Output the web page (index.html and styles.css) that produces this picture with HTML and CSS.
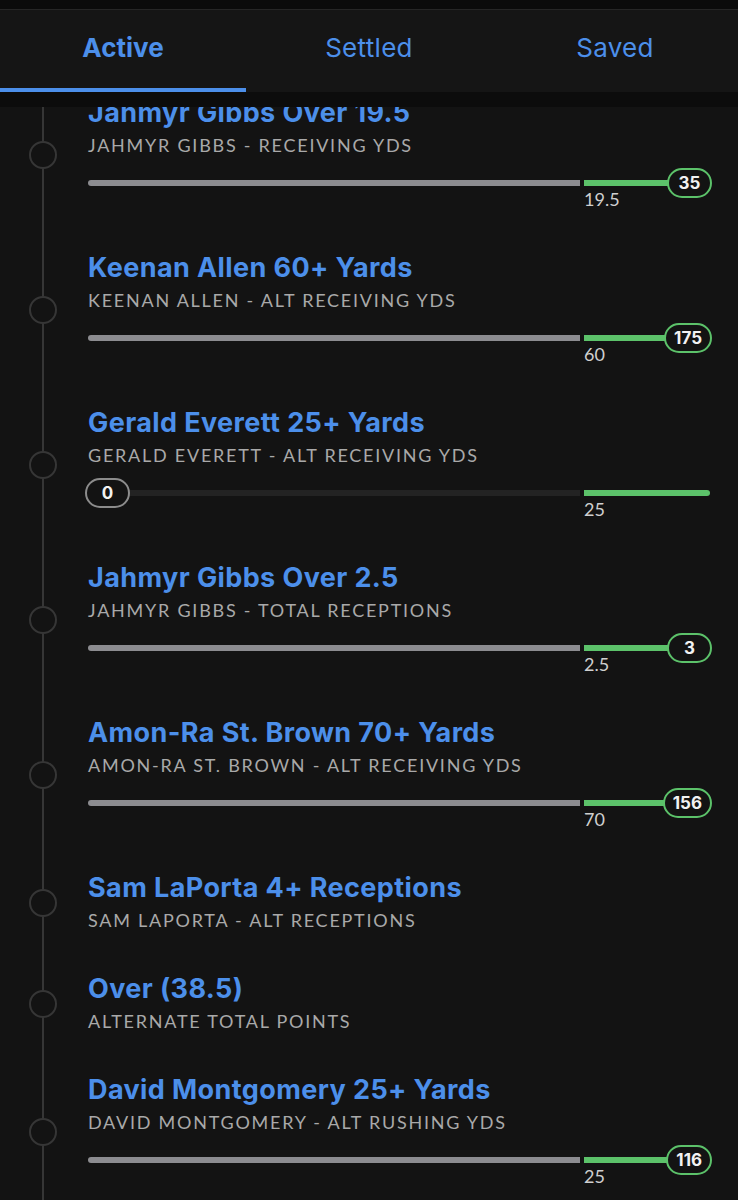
FILE: index.html
```html
<!DOCTYPE html>
<html lang="en">
<head>
  <meta charset="UTF-8">
  <meta name="viewport" content="width=device-width, initial-scale=1.0">
  <title>My Bets</title>
  <link rel="stylesheet" href="styles.css">
</head>
<body>
  <div class="statusbar"></div>

  <nav class="tabs">
    <div class="tab active">Active</div>
    <div class="tab">Settled</div>
    <div class="tab">Saved</div>
  </nav>
  <div class="shade"></div>

  <ul class="legs">
    <li class="leg first">
      <div class="node"><span class="dot"></span></div>
      <div class="body">
        <div class="title">Jahmyr Gibbs Over 19.5</div>
        <div class="market">Jahmyr Gibbs - Receiving Yds</div>
        <div class="meter">
          <div class="track">
            <span class="seg lo"></span><span class="seg hi"></span>
            <span class="badge end">35</span>
          </div>
          <div class="mark">19.5</div>
        </div>
      </div>
    </li>

    <li class="leg">
      <div class="node"><span class="dot"></span></div>
      <div class="body">
        <div class="title">Keenan Allen 60+ Yards</div>
        <div class="market">Keenan Allen - Alt Receiving Yds</div>
        <div class="meter">
          <div class="track">
            <span class="seg lo"></span><span class="seg hi"></span>
            <span class="badge end">175</span>
          </div>
          <div class="mark">60</div>
        </div>
      </div>
    </li>

    <li class="leg">
      <div class="node"><span class="dot"></span></div>
      <div class="body">
        <div class="title">Gerald Everett 25+ Yards</div>
        <div class="market">Gerald Everett - Alt Receiving Yds</div>
        <div class="meter">
          <div class="track">
            <span class="seg lo empty"></span><span class="seg hi"></span>
            <span class="badge start">0</span>
          </div>
          <div class="mark">25</div>
        </div>
      </div>
    </li>

    <li class="leg">
      <div class="node"><span class="dot"></span></div>
      <div class="body">
        <div class="title">Jahmyr Gibbs Over 2.5</div>
        <div class="market">Jahmyr Gibbs - Total Receptions</div>
        <div class="meter">
          <div class="track">
            <span class="seg lo"></span><span class="seg hi"></span>
            <span class="badge end">3</span>
          </div>
          <div class="mark">2.5</div>
        </div>
      </div>
    </li>

    <li class="leg">
      <div class="node"><span class="dot"></span></div>
      <div class="body">
        <div class="title">Amon-Ra St. Brown 70+ Yards</div>
        <div class="market">Amon-Ra St. Brown - Alt Receiving Yds</div>
        <div class="meter">
          <div class="track">
            <span class="seg lo"></span><span class="seg hi"></span>
            <span class="badge end">156</span>
          </div>
          <div class="mark">70</div>
        </div>
      </div>
    </li>

    <li class="leg">
      <div class="node"><span class="dot"></span></div>
      <div class="body">
        <div class="title">Sam LaPorta 4+ Receptions</div>
        <div class="market">Sam LaPorta - Alt Receptions</div>
      </div>
    </li>

    <li class="leg">
      <div class="node"><span class="dot"></span></div>
      <div class="body">
        <div class="title">Over (38.5)</div>
        <div class="market">Alternate Total Points</div>
      </div>
    </li>

    <li class="leg">
      <div class="node"><span class="dot"></span></div>
      <div class="body">
        <div class="title">David Montgomery 25+ Yards</div>
        <div class="market">David Montgomery - Alt Rushing Yds</div>
        <div class="meter">
          <div class="track">
            <span class="seg lo"></span><span class="seg hi"></span>
            <span class="badge end">116</span>
          </div>
          <div class="mark">25</div>
        </div>
      </div>
    </li>
  </ul>
</body>
</html>
```

FILE: styles.css
```css
body {
  margin: 0;
  background: #131313;
  font-family: Lato, "Open Sans", Arial, sans-serif;
  color: #fff;
  height: 1200px;
  overflow: hidden;
}
.statusbar {
  height: 9px;
  background: #0b0b0b;
  border-bottom: 1px solid #262626;
}
.tabs {
  display: flex;
  background: #151515;
}
.tab {
  flex: 1;
  display: flex;
  align-items: center;
  justify-content: center;
  padding-bottom: 4px;
  font-family: Inter, Lato, sans-serif;
  font-size: 26px;
  letter-spacing: 0.3px;
  color: #4c8fea;
  border-bottom: 4px solid transparent;
  box-sizing: border-box;
  height: 82px;
}
.tab.active {
  font-weight: bold;
  letter-spacing: 0;
  border-bottom-color: #4c8fea;
}
.shade {
  height: 15px;
  background: #0c0c0c;
}
.legs {
  list-style: none;
  margin: 0;
  padding: 0;
  position: relative;
  overflow: hidden;
  height: 1100px;
}
.legs::before {
  content: "";
  position: absolute;
  left: 42px;
  top: 0;
  bottom: 0;
  width: 2px;
  background: #363636;
}
.leg {
  display: flex;
  padding: 19px 0;
}
.leg.first {
  margin-top: -30px;
}
.node {
  width: 88px;
  flex: 0 0 88px;
  display: flex;
  align-items: center;
  justify-content: center;
  position: relative;
}
.dot {
  width: 24px;
  height: 24px;
  border: 2px solid #363636;
  border-radius: 50%;
  background: #131313;
  margin-left: -2px;
}
.body {
  flex: 1;
  padding-right: 28px;
  min-width: 0;
}
.title {
  font-family: Inter, Lato, sans-serif;
  font-size: 27px;
  line-height: 34px;
  letter-spacing: 0.4px;
  font-weight: bold;
  color: #4c8fea;
}
.market {
  margin-top: 1px;
  font-size: 18px;
  line-height: 28px;
  letter-spacing: 1.75px;
  text-transform: uppercase;
  color: #a9a9a9;
}
.meter {
  padding: 10px 0 4px;
}
.track {
  position: relative;
  height: 28px;
  display: flex;
  align-items: center;
}
.seg {
  height: 6px;
}
.seg.lo {
  flex: 0 0 79.1%;
  margin-right: 4px;
  background: #8c8c90;
  border-radius: 3px 0 0 3px;
}
.seg.lo.empty {
  background: #232323;
}
.seg.hi {
  flex: 1;
  background: #5cc26a;
  border-radius: 0 3px 3px 0;
}
.badge {
  position: absolute;
  top: -1px;
  height: 30px;
  min-width: 45px;
  box-sizing: border-box;
  padding: 0 8px;
  border: 2px solid #5cc26a;
  border-radius: 15px;
  background: #131313;
  display: flex;
  align-items: center;
  justify-content: center;
  font-family: Inter, Lato, sans-serif;
  font-size: 17px;
  font-weight: bold;
  color: #f2f2f2;
}
.badge.end {
  right: -2px;
}
.badge.start {
  left: -3px;
  border-color: #8c8c8c;
}
.mark {
  margin-left: calc(79.1% + 4px);
  margin-top: -8px;
  font-size: 18px;
  line-height: 20px;
  color: #cfcfcf;
}
```
